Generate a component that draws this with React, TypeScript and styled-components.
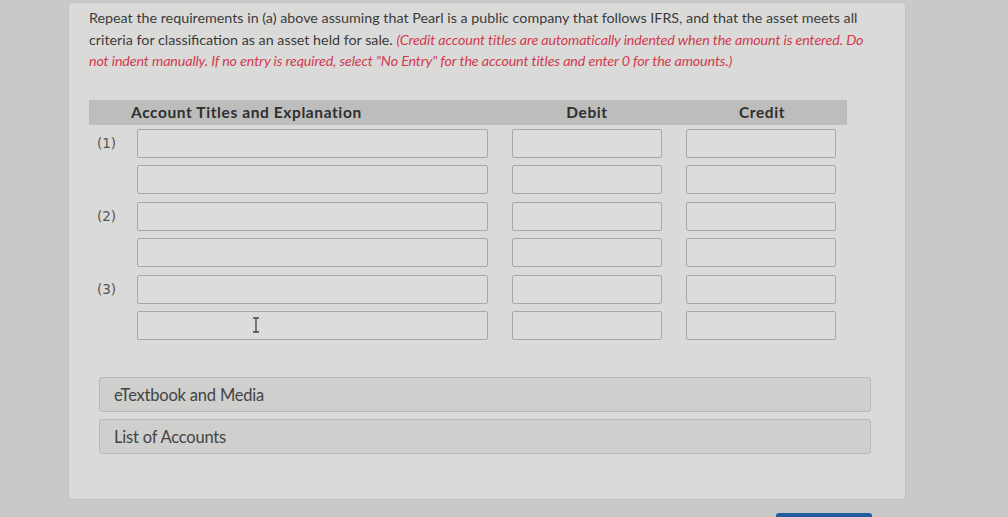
import React from "react";
import styled, { createGlobalStyle } from "styled-components";

const Global = createGlobalStyle`
  html, body { margin: 0; padding: 0; }
  body {
    background: #c9c9c8;
    font-family: Lato, "Open Sans", sans-serif;
    width: 1008px;
    height: 517px;
    overflow: hidden;
  }
`;

const Page = styled.div`
  display: flex;
  flex-direction: column;
  align-items: flex-start;
  padding: 2px 0 0 68px;
`;

const Card = styled.div`
  box-sizing: border-box;
  width: 838px;
  height: 498px;
  background: #dadad8;
  border: 1px solid #c2c2c0;
  border-radius: 4px;
  padding: 4px 20px 0 20px;
  display: flex;
  flex-direction: column;
`;

const Prompt = styled.p`
  margin: 0;
  width: 790px;
  font-size: 14.3px;
  line-height: 21.5px;
  color: #3b3b3b;
`;

const Note = styled.em`
  color: #d23a52;
  font-style: italic;
  letter-spacing: -0.13px;
`;

const Table = styled.div`
  margin-top: 28px;
  width: 758px;
  display: flex;
  flex-direction: column;
`;

const Header = styled.div`
  display: flex;
  align-items: center;
  height: 25px;
  background: #bdbdbc;
  font-weight: 700;
  font-size: 15.5px;
  letter-spacing: 0.6px;
  color: #2f2f30;
`;

const HeadCell = styled.div<{ $w: number; $align?: string; $pad?: number }>`
  width: ${(p) => p.$w}px;
  text-align: ${(p) => p.$align || "center"};
  padding-left: ${(p) => p.$pad || 0}px;
  box-sizing: border-box;
  flex: none;
`;

const Rows = styled.div`
  display: flex;
  flex-direction: column;
  gap: 7.5px;
  margin-top: 4px;
`;

const Row = styled.div`
  display: flex;
  align-items: center;
  height: 29px;
`;

const Label = styled.div`
  width: 48px;
  flex: none;
  padding-left: 8px;
  box-sizing: border-box;
  font-family: "DejaVu Sans", Verdana, sans-serif;
  font-size: 13.5px;
  color: #555;
`;

const Field = styled.div<{ $w: number; $ml: number }>`
  position: relative;
  box-sizing: border-box;
  flex: none;
  width: ${(p) => p.$w}px;
  margin-left: ${(p) => p.$ml}px;
  height: 29px;
  background: #dcdcdb;
  border: 1px solid #a8a8a8;
  border-radius: 2px;
`;

const Cursor = styled.svg`
  position: absolute;
  left: 113px;
  top: 5px;
`;

const Resources = styled.div`
  margin-top: 37px;
  margin-left: 10px;
  display: flex;
  flex-direction: column;
  gap: 7px;
  width: 772px;
`;

const ResourceBox = styled.div`
  box-sizing: border-box;
  height: 35px;
  background: #cfcfce;
  border: 1px solid #b9b9b8;
  border-radius: 3px;
  display: flex;
  align-items: center;
  padding-left: 14px;
  font-size: 16.5px;
  color: #444;
  letter-spacing: -0.2px;
`;

const Footer = styled.div`
  width: 838px;
  display: flex;
  justify-content: flex-end;
  margin-top: 13px;
`;

const SubmitButton = styled.div`
  width: 96px;
  height: 10px;
  margin-right: 34px;
  background: #1f5f9f;
  border-radius: 3px 3px 0 0;
`;

const rows = [
  { label: "(1)" },
  { label: "" },
  { label: "(2)" },
  { label: "" },
  { label: "(3)" },
  { label: "", cursor: true },
];

export default function App() {
  return (
    <>
      <Global />
      <Page>
        <Card>
          <Prompt>
            Repeat the requirements in (a) above assuming that Pearl is a public company that follows IFRS, and that the asset meets all
            criteria for classification as an asset held for sale.{" "}
            <Note>
              (Credit account titles are automatically indented when the amount is entered. Do not indent manually. If no entry is
              required, select "No Entry" for the account titles and enter 0 for the amounts.)
            </Note>
          </Prompt>
          <Table>
            <Header>
              <HeadCell $w={398} $align="left" $pad={42}>
                Account Titles and Explanation
              </HeadCell>
              <HeadCell $w={200}>Debit</HeadCell>
              <HeadCell $w={150}>Credit</HeadCell>
            </Header>
            <Rows>
              {rows.map((r, i) => (
                <Row key={i}>
                  <Label>{r.label}</Label>
                  <Field $w={351} $ml={0}>
                    {r.cursor && (
                      <Cursor width="10" height="16" viewBox="0 0 10 16">
                        <path d="M2 1h6M5 1v14M2 15h6" stroke="#444" strokeWidth="1.3" fill="none" />
                      </Cursor>
                    )}
                  </Field>
                  <Field $w={150} $ml={24} />
                  <Field $w={150} $ml={24} />
                </Row>
              ))}
            </Rows>
          </Table>
          <Resources>
            <ResourceBox>eTextbook and Media</ResourceBox>
            <ResourceBox>List of Accounts</ResourceBox>
          </Resources>
        </Card>
        <Footer>
          <SubmitButton />
        </Footer>
      </Page>
    </>
  );
}
